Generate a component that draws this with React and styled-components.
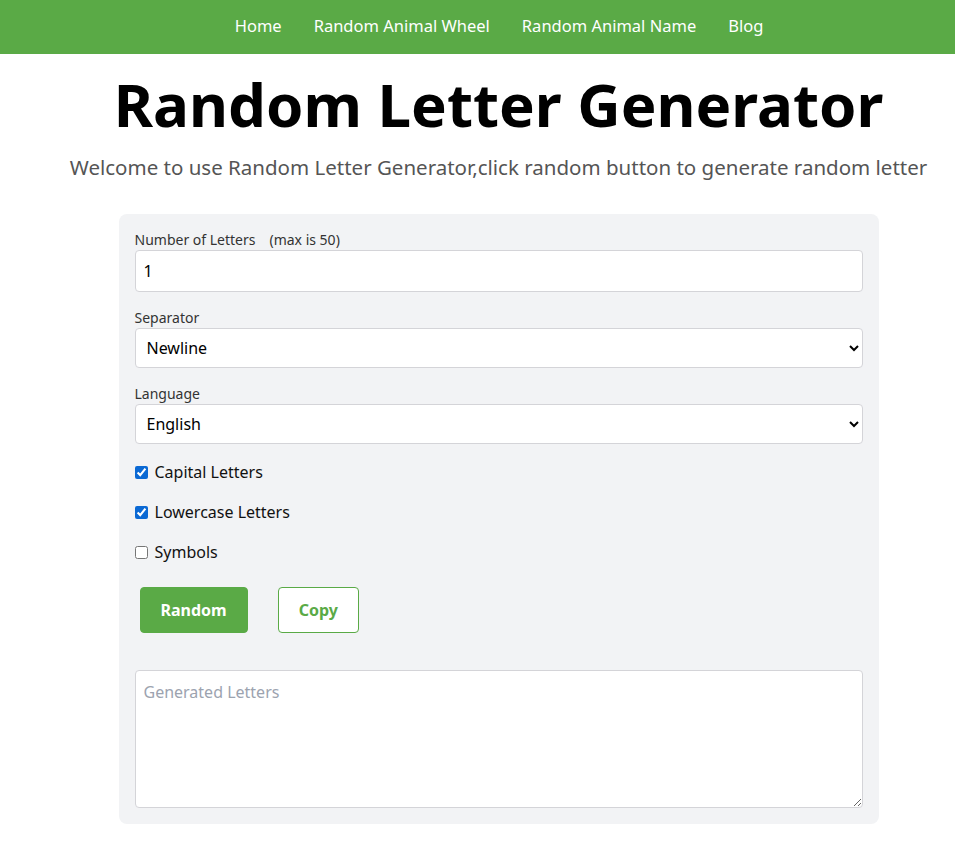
import styled, { createGlobalStyle } from "styled-components";

const Global = createGlobalStyle`
  body {
    margin: 0;
    font-family: "Noto Sans", "Open Sans", sans-serif;
    background: #fff;
  }
`;

const Nav = styled.nav`
  height: 54px;
  background: #5aaa46;
  display: flex;
  justify-content: center;
  align-items: center;
  gap: 32px;
  padding-left: 43px;
  padding-bottom: 3px;
  box-sizing: border-box;
`;

const NavLink = styled.a`
  color: #fff;
  font-size: 16.5px;
  text-decoration: none;
`;

const Main = styled.main`
  padding-left: 42px;
  display: flex;
  flex-direction: column;
  align-items: center;
`;

const Title = styled.h1`
  margin: 14px 0 0;
  font-size: 60px;
  font-weight: 700;
  line-height: 72px;
  color: #000;
`;

const Subtitle = styled.p`
  margin: 13px 0 0;
  font-size: 20.5px;
  line-height: 28px;
  color: #555;
`;

const Card = styled.section`
  margin-top: 33px;
  width: 760px;
  box-sizing: border-box;
  background: #f2f3f5;
  border-radius: 8px;
  padding: 16px;
  display: flex;
  flex-direction: column;
`;

const Label = styled.label`
  font-size: 14px;
  line-height: 20px;
  color: #333;
  display: block;
`;

const Hint = styled.span`
  margin-left: 14px;
`;

const Field = styled.div`
  margin-bottom: 16px;
`;

const Input = styled.input`
  width: 100%;
  box-sizing: border-box;
  height: 42px;
  border: 1px solid #d4d4d8;
  border-radius: 4px;
  padding: 0 8px;
  font-size: 16px;
  font-family: inherit;
  background: #fff;
  color: #000;
`;

const Select = styled.select`
  width: 100%;
  box-sizing: border-box;
  height: 40px;
  border: 1px solid #d4d4d8;
  border-radius: 4px;
  padding: 0 7px;
  font-size: 16px;
  font-family: inherit;
  background: #fff;
  color: #000;
`;

const Check = styled.label`
  display: flex;
  align-items: center;
  gap: 7px;
  height: 24px;
  font-size: 16px;
  color: #111;
  margin-bottom: 16px;
  input {
    margin: 0;
    width: 13px;
    height: 13px;
    accent-color: #0b69d4;
  }
`;

const Buttons = styled.div`
  display: flex;
  gap: 30px;
  padding-left: 5px;
  margin-top: 7px;
  margin-bottom: 37px;
`;

const Button = styled.button`
  height: 46px;
  padding: 0 20px;
  border-radius: 4px;
  font-size: 16px;
  font-weight: 700;
  font-family: inherit;
  cursor: pointer;
  border: 1px solid #5aaa46;
  background: ${(p) => (p.$outline ? "#fff" : "#5aaa46")};
  color: ${(p) => (p.$outline ? "#5aaa46" : "#fff")};
`;

const Output = styled.textarea`
  width: 100%;
  box-sizing: border-box;
  height: 138px;
  border: 1px solid #d4d4d8;
  border-radius: 4px;
  padding: 10px 8px;
  font-size: 16px;
  font-family: inherit;
  background: #fff;
  display: block;
  &::placeholder {
    color: #9ca3af;
  }
`;

export default function App() {
  return (
    <>
      <Global />
      <Nav>
        <NavLink href="#">Home</NavLink>
        <NavLink href="#">Random Animal Wheel</NavLink>
        <NavLink href="#">Random Animal Name</NavLink>
        <NavLink href="#">Blog</NavLink>
      </Nav>
      <Main>
        <Title>Random Letter Generator</Title>
        <Subtitle>
          Welcome to use Random Letter Generator,click random button to generate random letter
        </Subtitle>
        <Card>
          <Field>
            <Label>
              Number of Letters<Hint>(max is 50)</Hint>
            </Label>
            <Input defaultValue="1" />
          </Field>
          <Field>
            <Label>Separator</Label>
            <Select defaultValue="newline">
              <option value="newline">Newline</option>
              <option value="space">Space</option>
              <option value="comma">Comma</option>
            </Select>
          </Field>
          <Field>
            <Label>Language</Label>
            <Select defaultValue="en">
              <option value="en">English</option>
            </Select>
          </Field>
          <Check>
            <input type="checkbox" defaultChecked />
            Capital Letters
          </Check>
          <Check>
            <input type="checkbox" defaultChecked />
            Lowercase Letters
          </Check>
          <Check>
            <input type="checkbox" />
            Symbols
          </Check>
          <Buttons>
            <Button>Random</Button>
            <Button $outline>Copy</Button>
          </Buttons>
          <Output placeholder="Generated Letters" />
        </Card>
      </Main>
    </>
  );
}
